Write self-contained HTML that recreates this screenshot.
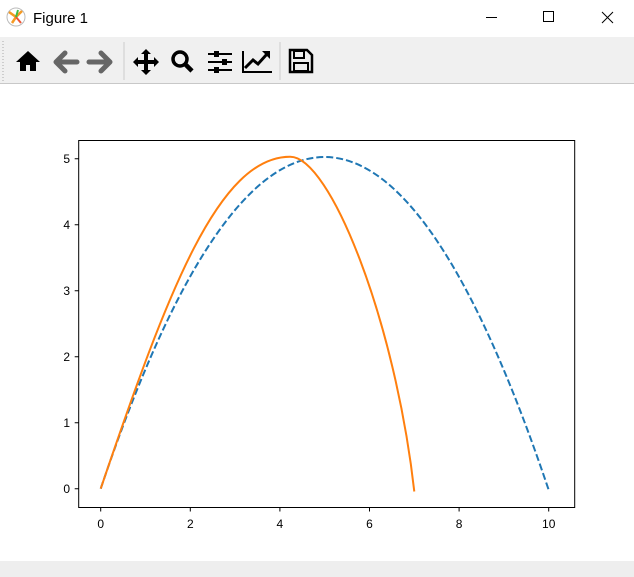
<!DOCTYPE html>
<html><head><style>
body{margin:0;width:634px;height:577px;background:#fff;position:relative;overflow:hidden;font-family:"Liberation Sans","Noto Sans CJK SC",sans-serif}
#tb{position:absolute;left:0;top:37px;width:634px;height:46px;background:#f0f0f0;border-bottom:1px solid #c8c8c8}
#sb{position:absolute;left:0;top:561px;width:634px;height:16px;background:#eeeeee}
</style></head><body>
<svg width="634" height="37" style="position:absolute;left:0;top:0">
<circle cx="16" cy="17" r="9" fill="#fff" stroke="#bbb"/>
<path d="M16 17 L9 12 M16 17 L12 23 M16 17 L22 11" stroke="#f59a23" stroke-width="2.5"/>
<path d="M16 17 L21 23" stroke="#e53" stroke-width="2"/><path d="M16 17 L18 10" stroke="#4b4" stroke-width="2"/>
<text x="33" y="23" font-size="15" fill="#000">Figure 1</text>
<path d="M486 17.5h11" stroke="#000"/>
<rect x="543.5" y="11.5" width="10" height="10" fill="none" stroke="#000"/>
<path d="M602 12 l11 11 M613 12 l-11 11" stroke="#000"/>
</svg>
<div id="tb"></div>
<svg width="634" height="50" style="position:absolute;left:0;top:37px">
<path d="M3 4v40" stroke="#aaa" stroke-dasharray="1 2"/>
<path d="M28 14 L16 25 h4 v9 h6 v-6 h4 v6 h6 v-9 h4z" fill="#000"/>
<path d="M65 16 L56 25 L65 34 M57 25 H77" stroke="#666" stroke-width="5" fill="none" stroke-linejoin="round" stroke-linecap="round"/>
<path d="M101 16 L110 25 L101 34 M109 25 H89" stroke="#666" stroke-width="5" fill="none" stroke-linejoin="round" stroke-linecap="round"/>
<path d="M124 5v38" stroke="#ccc"/>
<path d="M146 12 l5 5 h-3 v6 h6 v-3 l5 5 l-5 5 v-3 h-6 v6 h3 l-5 5 l-5 -5 h3 v-6 h-6 v3 l-5 -5 l5 -5 v3 h6 v-6 h-3z" fill="#000"/>
<circle cx="180" cy="22" r="7" fill="none" stroke="#000" stroke-width="3.5"/><path d="M185 27 l7 7" stroke="#000" stroke-width="4.5"/>
<path d="M208 17h24M208 25h24M208 33h24" stroke="#000" stroke-width="2"/><rect x="214" y="14" width="5" height="6" fill="#000"/><rect x="222" y="22" width="5" height="6" fill="#000"/><rect x="214" y="30" width="5" height="6" fill="#000"/>
<path d="M243 14v21h29" stroke="#000" stroke-width="2" fill="none"/><path d="M245 31 l8-8 l5 4 l9-10" stroke="#000" stroke-width="3" fill="none"/><path d="M262 14h8v8z" fill="#000"/>
<path d="M280 5v38" stroke="#ccc"/>
<path d="M290 13h17l5 5v17h-22z" fill="none" stroke="#000" stroke-width="2.5"/><rect x="294" y="14" width="10" height="7" fill="none" stroke="#000" stroke-width="2"/><rect x="294" y="26" width="14" height="8" fill="none" stroke="#000" stroke-width="2"/>
</svg>
<svg width="634" height="477" style="position:absolute;left:0;top:84px" viewBox="0 84 634 477">
<rect x="78.7" y="140.5" width="496" height="367" fill="#fff" stroke="#000" stroke-width="1"/>
<g stroke="#000"><path d="M100.7 507.5v4M190.3 507.5v4M279.9 507.5v4M369.5 507.5v4M459.1 507.5v4M548.7 507.5v4"/>
<path d="M78.7 488.7h-4M78.7 422.7h-4M78.7 356.7h-4M78.7 290.7h-4M78.7 224.7h-4M78.7 158.7h-4"/></g>
<g font-size="12" fill="#000" text-anchor="middle"><text x="100.7" y="528">0</text><text x="190.3" y="528">2</text><text x="279.9" y="528">4</text><text x="369.5" y="528">6</text><text x="459.1" y="528">8</text><text x="548.7" y="528">10</text></g>
<g font-size="12" fill="#000" text-anchor="end"><text x="70" y="493">0</text><text x="70" y="427">1</text><text x="70" y="361">2</text><text x="70" y="295">3</text><text x="70" y="229">4</text><text x="70" y="163">5</text></g>
<path d="M100.7 488.7 Q324.7 -175.3 548.7 490" fill="none" stroke="#1f77b4" stroke-width="2" stroke-dasharray="7 3"/>
<path d="M100.7 488.7 C167.9 290.7 218.5 156.7 290.2 156.7 C330 156.7 395 320 414.3 491.5" fill="none" stroke="#ff7f0e" stroke-width="2"/>
</svg>
<div id="sb"></div>
</body></html>
